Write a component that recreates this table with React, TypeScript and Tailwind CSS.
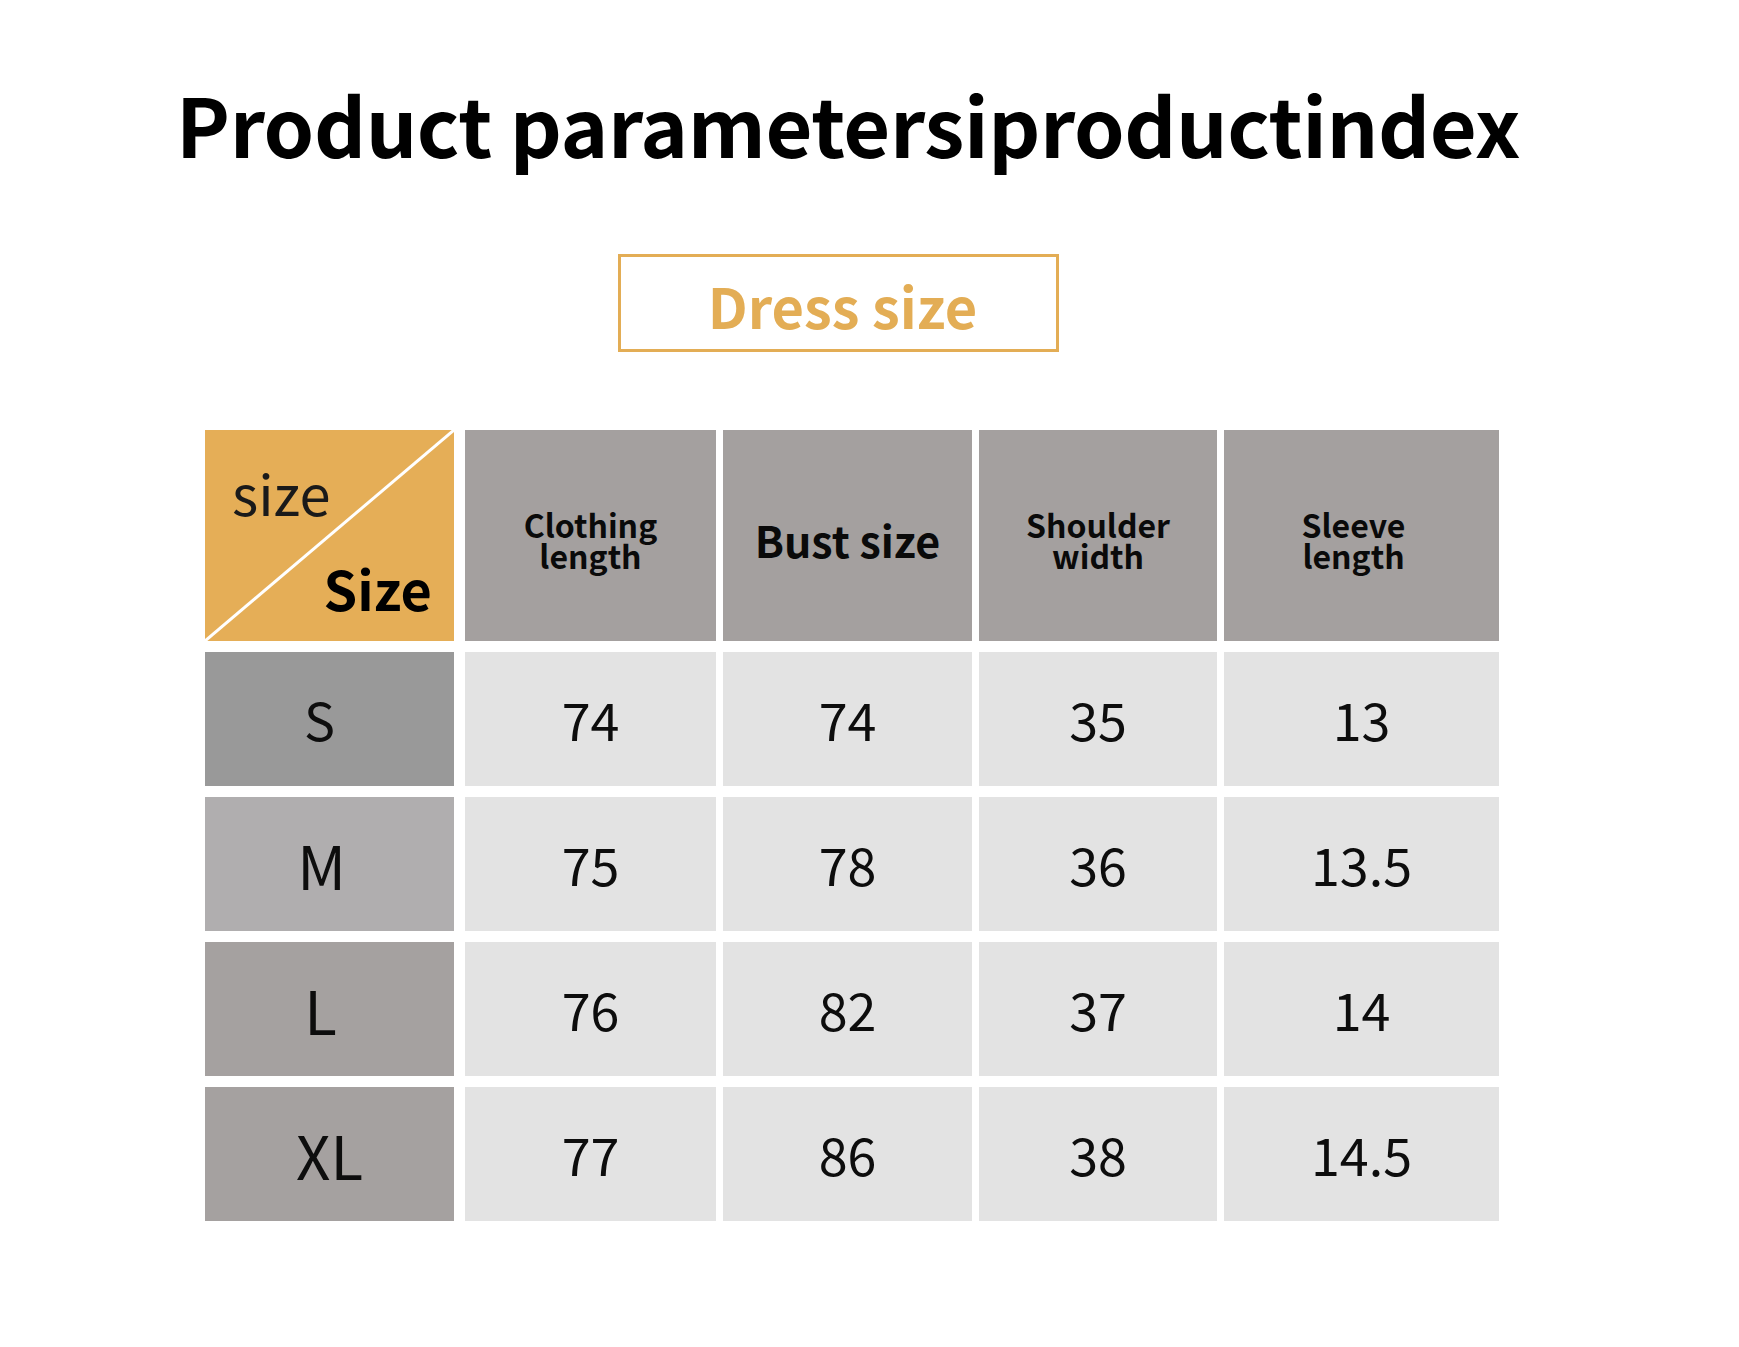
import React from "react";

const heads = [
    { label: ["Clothing", "length"], big: false, shift: "" },
    { label: ["Bust size"], big: true, shift: "" },
    { label: ["Shoulder", "width"], big: false, shift: "" },
    { label: ["Sleeve", "length"], big: false, shift: "pr-[16px]" },
];

const rows = [
    { size: "S", bg: "bg-[#999999]", text: "text-[52px] pr-[20px]", values: ["74", "74", "35", "13"] },
    { size: "M", bg: "bg-[#b0aeaf]", text: "text-[60px] pr-[16px]", values: ["75", "78", "36", "13.5"] },
    { size: "L", bg: "bg-[#a5a1a0]", text: "text-[60px] pr-[18px]", values: ["76", "82", "37", "14"] },
    { size: "XL", bg: "bg-[#a5a1a0]", text: "text-[60px]", values: ["77", "86", "38", "14.5"] },
];

const App = () => {
    return (
        <div className="w-[1739px] h-[1347px] bg-white text-black font-['Noto_Sans_CJK_SC',sans-serif]">
            <h1 className="pt-[82px] pl-[176px] text-[81px] font-bold leading-none whitespace-nowrap tracking-[-0.4px]">
                Product parametersiproductindex
            </h1>

            <div className="ml-[618px] mt-[91px] w-[441px] h-[98px] border-[3px] border-[#e3ad55] flex items-center justify-center">
                <p className="pl-[8px] pt-[4px] text-[56px] font-bold leading-none text-[#e3ad55]">Dress size</p>
            </div>

            <div className="ml-[205px] mt-[78px] grid grid-cols-[253px_251px_249px_238px_275px] gap-x-[7px] gap-y-[11px]">
                {/* corner cell */}
                <div className="relative w-[249px] h-[211px] bg-[#e5ae57]">
                    <svg className="absolute inset-0" width="249" height="211" viewBox="0 0 249 211">
                        <line x1="0" y1="211" x2="249" y2="0" stroke="white" strokeWidth="3" />
                    </svg>
                    <p className="absolute left-[27px] top-[34px] text-[56px] leading-none text-[#1a1a1a]">size</p>
                    <p className="absolute right-[22px] top-[131px] text-[54px] font-bold leading-none">Size</p>
                </div>

                {heads.map((h, i) =>
                    <div key={i} className={"h-[211px] bg-[#a4a09f] flex items-center justify-center pt-[8px] " + h.shift}>
                        <p className={h.big ? "text-[43px] font-bold leading-none text-[#0a0a0a]" : "text-[32px] font-bold leading-[31px] text-center text-[#0a0a0a]"}>
                            {h.label.map((line, j) =>
                                <React.Fragment key={j}>
                                    {j > 0 && <br />}
                                    {line}
                                </React.Fragment>
                            )}
                        </p>
                    </div>
                )}

                {rows.map((r) =>
                    <React.Fragment key={r.size}>
                        <div className={"w-[249px] h-[134px] flex items-center justify-center " + r.bg}>
                            <p className={"leading-none text-[#0d0d0d] " + r.text}>{r.size}</p>
                        </div>
                        {r.values.map((v, i) =>
                            <div key={i} className="h-[134px] bg-[#e3e3e3] flex items-center justify-center">
                                <p className="text-[52px] leading-none text-[#0d0d0d]">{v}</p>
                            </div>
                        )}
                    </React.Fragment>
                )}
            </div>
        </div>
    );
}
export default App;
